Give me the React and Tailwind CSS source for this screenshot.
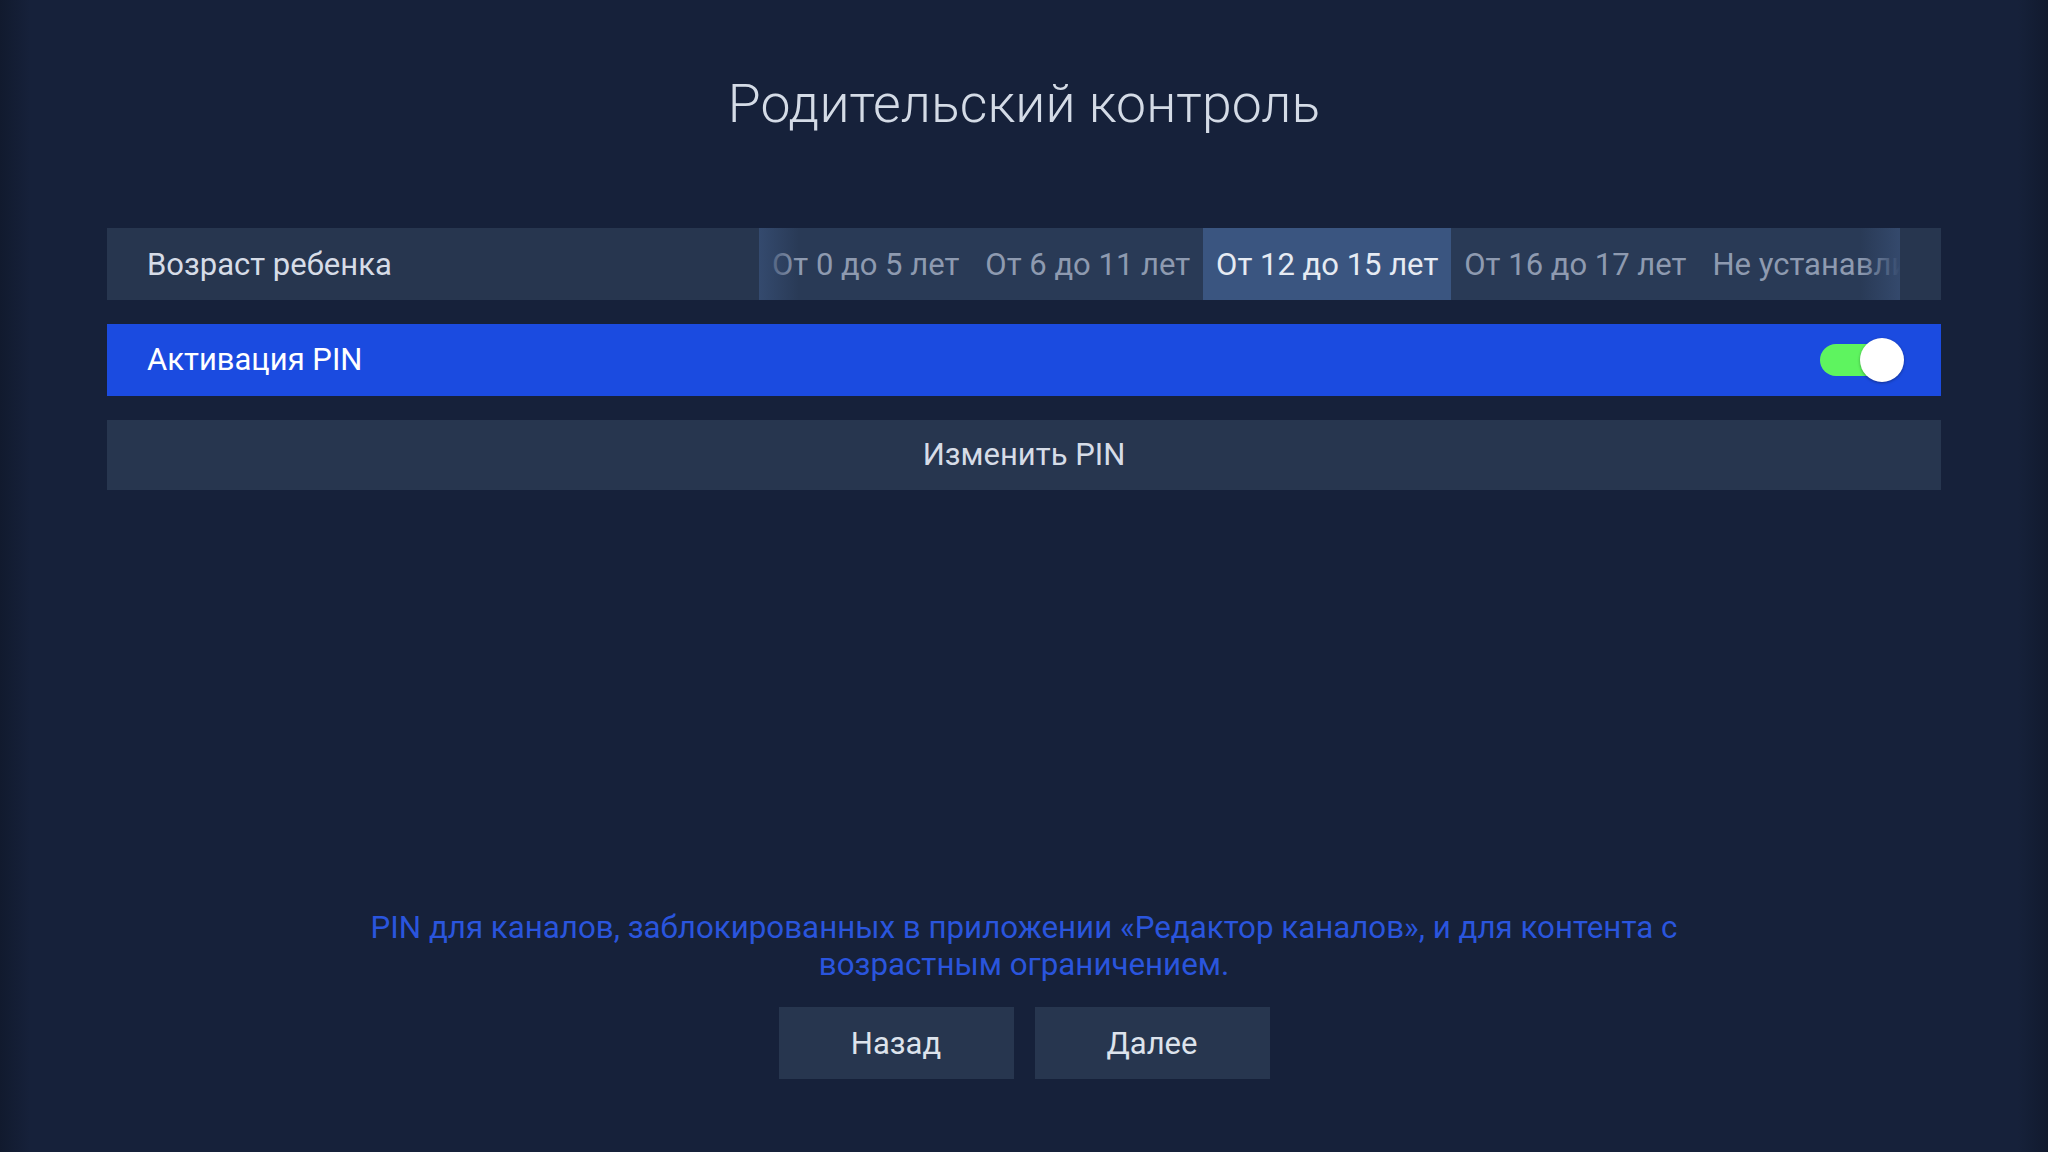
import React from "react";

const options = [
  "От 0 до 5 лет",
  "От 6 до 11 лет",
  "От 12 до 15 лет",
  "От 16 до 17 лет",
  "Не устанавливать",
];

export default function App() {
  return (
    <div
      className="w-full h-[1152px] bg-[#16213a] flex flex-col items-center overflow-hidden relative"
      style={{ fontFamily: "Roboto, 'Noto Sans', sans-serif" }}
    >
      <div className="absolute inset-y-0 left-0 w-[30px] bg-gradient-to-r from-[#111a2e] to-transparent pointer-events-none" />
      <div className="absolute inset-y-0 right-0 w-[30px] bg-gradient-to-l from-[#111a2e] to-transparent pointer-events-none" />

      <h1 className="pt-[72px] text-[53.5px] leading-[64px] font-light text-[#d4dbe6] tracking-[0.1px]">
        Родительский контроль
      </h1>

      <div className="mt-[92px] w-full px-[107px] flex flex-col gap-[24px]">
        <div className="h-[72px] bg-[#27364f] flex items-center">
          <div className="pl-[40px] pt-[3px] w-[652px] shrink-0 text-[31px] text-[#d6dce7]">
            Возраст ребенка
          </div>
          <div className="relative h-full w-[1141px] shrink-0 overflow-hidden bg-[#293a56] flex">
            {options.map((o, i) => (
              <div
                key={o}
                className={
                  "h-full shrink-0 flex items-center pt-[3px] px-[13px] text-[31px] whitespace-nowrap " +
                  (i === 2
                    ? "bg-[#3a5580] text-[#e6ebf3]"
                    : "text-[#8e9ab0]")
                }
              >
                {o}
              </div>
            ))}
            <div className="absolute inset-y-0 left-0 w-[40px] bg-gradient-to-r from-[#344a6e] to-transparent pointer-events-none" />
            <div className="absolute inset-y-0 right-0 w-[40px] bg-gradient-to-l from-[#34496c] to-transparent pointer-events-none" />
          </div>
        </div>

        <div className="h-[72px] bg-[#1b4be0] flex items-center justify-between pl-[40px] pr-[37px]">
          <span className="text-[31px] text-white">Активация PIN</span>
          <div className="relative w-[84px] h-[44px] flex items-center">
            <div className="w-[70px] h-[32px] rounded-full bg-[#5ef45f]" />
            <div className="absolute right-0 top-0 w-[44px] h-[44px] rounded-full bg-white shadow-[0_1px_3px_rgba(0,0,0,0.35)]" />
          </div>
        </div>

        <div className="h-[70px] bg-[#27364f] flex items-center justify-center text-[31px] text-[#d6dce7]">
          Изменить PIN
        </div>
      </div>

      <div className="flex-1" />

      <p className="w-[1400px] text-center text-[31.3px] leading-[37px] text-[#2a55dd]">
        PIN для каналов, заблокированных в приложении «Редактор каналов», и для контента с
        возрастным ограничением.
      </p>

      <div className="mt-[24px] mb-[73px] flex gap-[21px]">
        <button className="w-[235px] h-[72px] pt-[2px] bg-[#27364f] text-[31px] text-[#dde3ec]">
          Назад
        </button>
        <button className="w-[235px] h-[72px] pt-[2px] bg-[#27364f] text-[31px] text-[#dde3ec]">
          Далее
        </button>
      </div>
    </div>
  );
}
